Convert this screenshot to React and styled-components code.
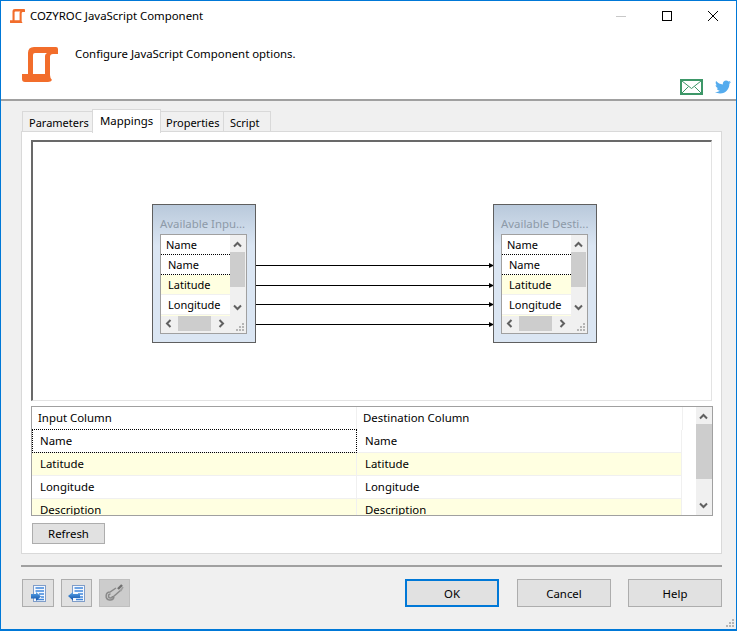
import React from "react";
import styled, { createGlobalStyle } from "styled-components";
import { FaTwitter } from "react-icons/fa";

const Global = createGlobalStyle`
  html, body { margin: 0; padding: 0; background: #f0f0f0; }
  body { font-family: "Noto Sans", "Liberation Sans", sans-serif; font-size: 11.4px; color: #000; }
  * { box-sizing: border-box; }
`;

const Win = styled.div`
  width: 737px; height: 631px; display: flex; flex-direction: column; overflow: hidden;
  border: solid #0078d7; border-width: 1px 1px 2px 1px; background: #f0f0f0; position: relative;
`;
const TitleBar = styled.div`
  height: 30px; flex: none; display: flex; align-items: center; background: #fff; padding: 0 0 0 9px; gap: 5px;
`;
const Title = styled.span`flex: 1; font-size: 11.4px; white-space: nowrap; position: relative; top: -1px;`;
const WinBtns = styled.div`display: flex; height: 30px; align-items: center;`;
const WinBtn = styled.span`width: 46px; height: 30px; display: flex; align-items: center; justify-content: center;`;
const Header = styled.div`
  height: 70px; flex: none; background: #fff; border-bottom: 2px solid #a0a0a0;
  display: flex; padding: 16px 0 0 21px; position: relative;
`;
const HeaderText = styled.div`margin-left: 17px; margin-top: -1px; font-size: 11.4px; line-height: 16px;`;
const Social = styled.div`position: absolute; right: 5px; bottom: 4px; display: flex; align-items: center; gap: 12px;`;

const Body = styled.div`flex: 1; display: flex; flex-direction: column; padding: 8px 14px 0 20px;`;
const TabStrip = styled.div`display: flex; align-items: flex-end; height: 23px; padding-left: 1px; position: relative; z-index: 1;`;
const Tab = styled.div`
  height: 21px;
  padding: 2px 0 0 ${p => p.$pad}px;
  background: #f0f0f0;
  border: 1px solid #d9d9d9;
  margin-left: ${p => (p.$first ? 0 : "-1px")};
  width: ${p => p.$w}px;
  font-size: 11px; line-height: 17px; white-space: nowrap;
`;
const ActiveTab = styled(Tab)`
  height: 24px; padding: 2px 0 0 7px; background: #fff; border-bottom: none; font-size: 11.4px;
  position: relative; z-index: 2; margin-bottom: -1px;
`;
const Panel = styled.div`
  width: 701px; height: 423px; flex: none; background: #fff; border: 1px solid #d9d9d9; margin-top: -1px;
  padding: 8px 9px 0 9px; display: flex; flex-direction: column;
`;
const Canvas = styled.div`
  width: 681px; height: 261px; position: relative; background: #fff; flex: none;
  border-style: solid; border-width: 2px 1px 1px 2px; border-color: #696969 #e3e3e3 #e3e3e3 #696969;
`;
const Wires = styled.svg`position: absolute; left: 0; top: 0;`;
const Node = styled.div`
  position: absolute; left: ${p => p.$x}px; top: 62px; width: 104px; height: 139px;
  border: 1px solid #5f5f5f; background: linear-gradient(#b9c9db, #dbe6f3 30%, #dbe6f3);
  padding: 0 7px;
`;
const NodeTitle = styled.div`
  height: 29px; padding-top: 10px; font-size: 11.4px; line-height: 17px; color: #8d9aa8; white-space: nowrap;
`;
const MiniList = styled.div`
  width: 87px; height: 100px; border: 1px solid #a0a0a0; background: #f0f0f0; display: grid;
  grid-template-columns: 69px 16px; grid-template-rows: 81px 16px; position: relative;
`;
const MiniRows = styled.div`background: #fff; overflow: hidden; display: flex; flex-direction: column;`;
const MiniHead = styled.div`height: 19px; flex: none; padding-left: 5px; font-size: 11px; line-height: 20px;`;
const MiniRow = styled.div`
  height: 20px; flex: none; padding-left: 7px; font-size: 11px; line-height: 19px;
  background: ${p => (p.$alt ? "#ffffe1" : "#fff")};
  border-bottom: 1px solid #f0f0f0;
  ${p => p.$focus && "border-top: 1px dotted #000; border-bottom: 1px dotted #000; height: 21px;"}
`;
const VBar = styled.div`background: #f0f0f0; position: relative;`;
const HBar = styled.div`background: #f0f0f0; position: relative; height: 16px;`;
const Thumb = styled.div`
  position: absolute; background: #cdcdcd;
  left: ${p => p.$l}px; top: ${p => p.$t}px; width: ${p => p.$w}px; height: ${p => p.$h}px;
`;
const ChevBox = styled.span`position: absolute; display: flex; left: ${p => p.$l}px; top: ${p => p.$t}px;`;

const Grid = styled.div`
  width: 682px; height: 110px; margin-top: 5px; flex: none; border: 1px solid #a0a0a0; background: #fff;
  position: relative; overflow: hidden;
`;
const GridTable = styled.div`width: 651px;`;
const HeadRow = styled.div`display: grid; grid-template-columns: 325px 326px; height: 23px;`;
const HeadCell = styled.div`
  padding-left: 6px; font-size: 11.4px; line-height: 22px; border-right: 1px solid #f0f0f0;
`;
const Row = styled.div`
  display: grid; grid-template-columns: 325px 325px; height: 23px; width: 650px;
  background: ${p => (p.$alt ? "#ffffe1" : "#fff")};
  border-bottom: 1px solid #f0f0f0;
`;
const Cell = styled.div`
  padding-left: 8px; font-size: 11.4px; line-height: 22px; border-right: 1px solid #f0f0f0;
  ${p => p.$focus && "border: 1px dotted #000; line-height: 22px; padding-left: 7px; height: 24px; margin-top: -1px;"}
`;
const GridBar = styled.div`position: absolute; right: 0; top: 0; bottom: 0; width: 16px; background: #f0f0f0;`;
const PlainBtn = styled.button`
  font: inherit; font-size: 11.4px; color: #000; background: #e1e1e1; border: 1px solid #adadad; padding: 0;
  display: flex; align-items: center; justify-content: center;
`;
const RefreshBtn = styled(PlainBtn)`width: 73px; height: 21px; margin-top: 7px; margin-left: 1px;`;

const Rule = styled.div`height: 2px; flex: none; width: 701px; background: #a0a0a0; margin-top: 11px;`;
const Footer = styled.div`display: flex; align-items: center; margin-top: 12px; padding-left: 1px;`;
const IconBtn = styled(PlainBtn)`
  width: ${p => p.$w}px; height: 28px; margin-right: ${p => p.$mr}px;
  ${p => p.$off && "background: #cccccc; border-color: #bfbfbf;"}
`;
const DlgBtn = styled(PlainBtn)`
  width: 94px; height: 28px; margin-left: ${p => p.$ml}px;
  ${p => p.$def && "border: 2px solid #0078d7;"}
`;
const Grip = styled.svg`position: absolute; right: 1px; bottom: 1px;`;

const Logo = ({ size }) => (
  <svg width={size} height={size * 35 / 36} viewBox="0 0 36 35" style={{ flex: "none" }}>
    <path
      fill="#f26d2b"
      fillRule="evenodd"
      d="M6 27 V6 Q6 0 12 0 H34 Q36 0 36 2 V7 H31 Q28 7 28 10 V28 Q28 31 30 33 Q29 35 26 35 H3 Q0 35 0 32 V27 Z M11 27 H23 V9 Q23 7 25 6 H13 Q11 6 11 8 Z"
    />
  </svg>
);

const Doc = ({ flip }) => (
  <svg width="22" height="21" viewBox="0 0 22 21">
    <defs>
      <linearGradient id={flip ? "a2" : "a1"} x1="0" y1="0" x2="0" y2="1">
        <stop offset="0" stopColor="#5aa6e8" />
        <stop offset="1" stopColor="#0f4fa8" />
      </linearGradient>
    </defs>
    <rect x="6.5" y="2.5" width="12" height="16" fill="#f4f8fe" stroke="#7f9dc9" />
    <path stroke="#3f86dc" strokeWidth="1.4" d="M8.5 5H17M8.5 8H17M12 11H17M14 14H17M10 16.5H17" />
    {flip ? (
      <path fill="url(#a2)" d="M2 13 L7 9 V11 H14 V15 H7 V17.5 Z" />
    ) : (
      <path fill="url(#a1)" d="M4 11 H9 V9 L14 13.5 L9 18 V15.5 H4 Z" />
    )}
  </svg>
);

const Chain = () => (
  <svg width="20" height="20" viewBox="0 0 20 20" fill="none" stroke="#8a8a8a" strokeWidth="1.5">
    <path d="M9 14 A4 4 0 1 1 5 9 L11 5" />
    <path d="M7.5 13 A2 2 0 1 1 5.5 11" />
    <path d="M8 14 L16 7" />
    <path d="M13 6 L17 2" stroke="#707070" strokeWidth="2.4" />
    <path d="M15.5 8 L18 4" stroke="#a0a0a0" strokeWidth="1.6" />
  </svg>
);

const Chev = ({ dir }) => {
  const d = { up: "M1 5.5 L4.5 2 L8 5.5", down: "M1 1.5 L4.5 5 L8 1.5", left: "M5.5 1 L2 4.5 L5.5 8", right: "M1.5 1 L5 4.5 L1.5 8" }[dir];
  const hor = dir === "left" || dir === "right";
  return (
    <svg width={hor ? 7 : 9} height={hor ? 9 : 7} viewBox={hor ? "0 0 7 9" : "0 0 9 7"} fill="none" stroke="#606060" strokeWidth="2">
      <path d={d} />
    </svg>
  );
};

const GripDots = () => (
  <Grip width="10" height="10" viewBox="0 0 10 10" fill="#b5b5b5">
    <rect x="7" y="1" width="2" height="2" />
    <rect x="4" y="4" width="2" height="2" /><rect x="7" y="4" width="2" height="2" />
    <rect x="1" y="7" width="2" height="2" /><rect x="4" y="7" width="2" height="2" /><rect x="7" y="7" width="2" height="2" />
  </Grip>
);

const MiniNode = ({ x, title }) => (
  <Node $x={x}>
    <NodeTitle>{title}</NodeTitle>
    <MiniList>
      <MiniRows>
        <MiniHead>Name</MiniHead>
        <MiniRow $focus>Name</MiniRow>
        <MiniRow $alt>Latitude</MiniRow>
        <MiniRow>Longitude</MiniRow>
        <MiniRow $alt />
      </MiniRows>
      <VBar>
        <ChevBox $l={3} $t={6}><Chev dir="up" /></ChevBox>
        <Thumb $l={0} $t={17} $w={15} $h={35} />
        <ChevBox $l={3} $t={69}><Chev dir="down" /></ChevBox>
      </VBar>
      <HBar>
        <ChevBox $l={4} $t={3}><Chev dir="left" /></ChevBox>
        <Thumb $l={17} $t={0} $w={33} $h={15} />
        <ChevBox $l={57} $t={3}><Chev dir="right" /></ChevBox>
      </HBar>
      <GripDots />
    </MiniList>
  </Node>
);

const wireY = [123, 143, 162, 182];

export default function App() {
  return (
    <>
      <Global />
      <Win>
        <TitleBar>
          <Logo size={15} />
          <Title>COZYROC JavaScript Component</Title>
          <WinBtns>
            <WinBtn>
              <svg width="10" height="10" viewBox="0 0 10 10"><path d="M0 5.5H10" stroke="#c8c8c8" /></svg>
            </WinBtn>
            <WinBtn>
              <svg width="10" height="10" viewBox="0 0 10 10" fill="none"><rect x="0.5" y="0.5" width="9" height="9" stroke="#000" /></svg>
            </WinBtn>
            <WinBtn>
              <svg width="10" height="10" viewBox="0 0 10 10"><path d="M0 0L10 10M10 0L0 10" stroke="#000" /></svg>
            </WinBtn>
          </WinBtns>
        </TitleBar>
        <Header>
          <Logo size={36} />
          <HeaderText>Configure JavaScript Component options.</HeaderText>
          <Social>
            <svg width="23" height="16" viewBox="0 0 23 16" fill="none" stroke="#3d9768">
              <rect x="1" y="1" width="21" height="14" strokeWidth="2" fill="#fff" />
              <path d="M2 2L11.5 9.5L21 2M2 14L8.5 7.5M21 14L14.5 7.5" strokeWidth="1" />
            </svg>
            <FaTwitter size={16} color="#55acee" />
          </Social>
        </Header>
        <Body>
          <TabStrip>
            <Tab $first $w={71} $pad={6}>Parameters</Tab>
            <ActiveTab $w={69}>Mappings</ActiveTab>
            <Tab $w={64} $pad={5}>Properties</Tab>
            <Tab $w={48} $pad={6}>Script</Tab>
          </TabStrip>
          <Panel>
            <Canvas>
              <Wires width="678" height="258" viewBox="0 0 678 258">
                {wireY.map(y => (
                  <g key={y}>
                    <path d={`M222 ${y + 0.5}H456`} stroke="#000" />
                    <path d={`M456 ${y - 2}L461 ${y + 0.5}L456 ${y + 3}Z`} fill="#000" />
                  </g>
                ))}
              </Wires>
              <MiniNode x={119} title="Available Inpu..." />
              <MiniNode x={460} title="Available Desti..." />
            </Canvas>
            <Grid>
              <GridTable>
                <HeadRow>
                  <HeadCell>Input Column</HeadCell>
                  <HeadCell>Destination Column</HeadCell>
                </HeadRow>
                <Row><Cell $focus>Name</Cell><Cell>Name</Cell></Row>
                <Row $alt><Cell>Latitude</Cell><Cell>Latitude</Cell></Row>
                <Row><Cell>Longitude</Cell><Cell>Longitude</Cell></Row>
                <Row $alt><Cell>Description</Cell><Cell>Description</Cell></Row>
              </GridTable>
              <GridBar>
                <ChevBox $l={3} $t={6}><Chev dir="up" /></ChevBox>
                <Thumb $l={0} $t={17} $w={16} $h={55} />
                <ChevBox $l={3} $t={95}><Chev dir="down" /></ChevBox>
              </GridBar>
            </Grid>
            <RefreshBtn>Refresh</RefreshBtn>
          </Panel>
          <Rule />
          <Footer>
            <IconBtn $w={32} $mr={7}><Doc /></IconBtn>
            <IconBtn $w={31} $mr={7}><Doc flip /></IconBtn>
            <IconBtn $w={31} $mr={0} $off><Chain /></IconBtn>
            <DlgBtn $ml={275} $def>OK</DlgBtn>
            <DlgBtn $ml={18}>Cancel</DlgBtn>
            <DlgBtn $ml={17}>Help</DlgBtn>
          </Footer>
        </Body>
        <GripDots />
      </Win>
    </>
  );
}
